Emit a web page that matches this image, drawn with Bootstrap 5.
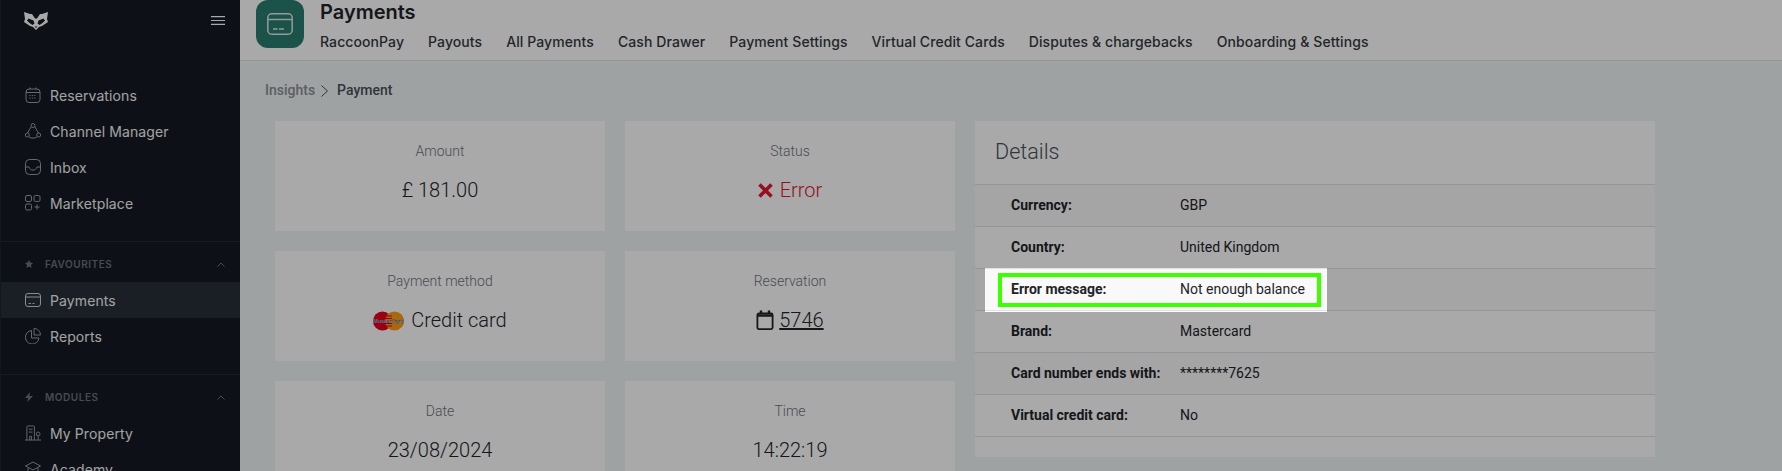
<!DOCTYPE html>
<html lang="en">
<head>
  <meta charset="UTF-8">
  <meta name="viewport" content="width=device-width, initial-scale=1.0">
  <title>Payment</title>
  <link href="https://cdn.jsdelivr.net/npm/bootstrap@5.3.3/dist/css/bootstrap.min.css" rel="stylesheet">
  <script src="https://cdn.jsdelivr.net/npm/bootstrap@5.3.3/dist/js/bootstrap.bundle.min.js" defer></script>
  <style>
    html {
      height: 471px;
      overflow: hidden;
    }
    body {
      height: 471px;
      overflow: hidden;
      background: #eff5f5;
      font-family: "Roboto", "Liberation Sans", sans-serif;
      font-size: 14px;
    }
    .side-bar {
      width: 240px;
      height: 471px;
      flex: none;
      overflow: hidden;
      background: #141a23;
      border-left: 1px solid #1c232d;
      font-family: "Inter", "Liberation Sans", sans-serif;
      color: #fff;
    }
    .side-top {
      height: 77px;
      padding: 12px 15px 0 23px;
    }
    .side-link {
      height: 36px;
      padding-left: 24px;
      gap: 9px;
      color: #f4f4f4;
      text-decoration: none;
      font-size: 14px;
      letter-spacing: .1px;
    }
    .side-link svg { flex: none; }
    .side-link.is-active { background: #263039; }
    .side-rule { border-top: 1px solid #232b36; }
    .side-gap { margin-top: 20px; }
    .side-head {
      height: 40px;
      padding: 4px 15px 0 24px;
      color: #6d7178;
      font-size: 10px;
      font-weight: 600;
      letter-spacing: .55px;
      text-transform: uppercase;
    }
    .top-bar {
      height: 61px;
      background: #fff;
      border-bottom: 1px solid #dfe3e3;
      padding-left: 16px;
      font-family: "Inter", "Liberation Sans", sans-serif;
    }
    .app-tile {
      width: 48px;
      height: 48px;
      flex: none;
      border-radius: 12px;
      background: #2a7c6e;
    }
    .page-title {
      font-size: 20px;
      font-weight: 600;
      line-height: 24px;
      color: #212529;
      margin: 0;
    }
    .tab-row { gap: 24px; margin-top: 6px; }
    .tab-link {
      font-size: 14px;
      font-weight: 500;
      line-height: 24px;
      color: #343a40;
      text-decoration: none;
      letter-spacing: .09px;
    }
    .crumbs {
      height: 60px;
      padding: 20px 0 0 25px;
      font-weight: 500;
      line-height: 18px;
      color: #8a8f94;
    }
    .crumbs svg { margin-left: 2px; }
    .crumbs b { font-weight: 500; color: #495057; margin-left: 6px; }
    .content-grid {
      display: grid;
      grid-template-columns: 330px 330px 680px;
      gap: 20px;
      padding-left: 35px;
      align-items: start;
    }
    .stat-grid {
      grid-column: span 2;
      display: grid;
      grid-template-columns: 330px 330px;
      grid-auto-rows: 110px;
      gap: 20px;
    }
    .stat-box {
      background: #fff;
      text-align: center;
      padding-top: 20px;
    }
    .stat-label {
      font-weight: 300;
      line-height: 20px;
      color: #6c757d;
    }
    .stat-value {
      font-size: 20px;
      font-weight: 300;
      line-height: 28px;
      margin-top: 15px;
      color: #212529;
    }
    .stat-value a { color: inherit; }
    .stat-err { color: #e4162f; }
    .err-mark { margin-right: 7px; vertical-align: -1px; }
    .card-mark { margin-right: 2px; vertical-align: -4px; }
    .cal-mark { vertical-align: -3px; }
    .info-box {
      position: relative;
      height: 336px;
      background: #fff;
    }
    .info-title {
      height: 64px;
      margin: 0;
      padding: 17px 20px 0;
      font-size: 21.6px;
      font-weight: 300;
      line-height: 28px;
      color: #495057;
      border-bottom: 1px solid #dee2e6;
    }
    .info-table {
      --bs-table-striped-bg: rgba(0, 0, 0, .025);
      margin: 0;
      border-collapse: separate;
      border-spacing: 0;
    }
    .info-table td {
      height: 42px;
      padding: 0;
      vertical-align: middle;
      color: #212529;
    }
    .info-table .info-key {
      width: 205px;
      padding-left: 36px;
      font-weight: 700;
    }
    /* tour spotlight over the error row */
    .tour-spot {
      position: absolute;
      top: 147px;
      left: 10px;
      width: 342px;
      height: 44px;
      box-shadow: 0 0 0 2400px rgba(0, 0, 0, .337);
      z-index: 10;
    }
    .tour-frame {
      position: absolute;
      top: 5px;
      left: 13px;
      width: 323px;
      height: 34px;
      border: 4px solid #3cff00;
    }
  </style>
</head>
<body class="d-flex">
  <aside class="side-bar">
    <div class="side-top d-flex justify-content-between">
      <svg width="24" height="18" viewBox="0 0 24 18">
        <path fill="#fff" d="M0 0l6 2h12l6-2-1 7 1 3-6 4-3 1-3 3-3-3-3-1-6-4 1-3z"/>
        <path fill="#141a23" d="M8 2h8l-3 4.500h-2z"/>
        <path fill="#141a23" d="M4.500 6.500l5 2 1 3-2 1.500-3-2-2.500-2.500zM19.500 6.500l-5 2-1 3 2 1.500 3-2 2.500-2.500z"/>
        <path fill="#141a23" d="M10.500 14.500h3L12 16z"/>
      </svg>
      <svg class="mt-1" width="14" height="9" viewBox="0 0 14 9" stroke="#fff" stroke-width="1.2"><path d="M0 .7h14M0 4.500h14M0 8.300h14"/></svg>
    </div>
    <a class="side-link d-flex align-items-center" href="#">
      <svg width="16" height="16" viewBox="0 0 16 16" fill="none" stroke="#9aa0a6"><rect x="1" y="2" width="14" height="13.500" rx="3"/><path d="M1 5.500h14M5 .5v2M11 .5v2"/><path stroke-dasharray="1.2 1.2" d="M4.500 8.500h7M4.500 11h7"/></svg>
      Reservations
    </a>
    <a class="side-link d-flex align-items-center" href="#">
      <svg width="16" height="16" viewBox="0 0 16 16" fill="none" stroke="#9aa0a6"><circle cx="8" cy="2.500" r="2"/><circle cx="2.300" cy="12" r="2"/><circle cx="13.700" cy="12" r="2"/><path d="M6.300 3.500L2.500 10M9.700 3.500L13.500 10M4 14c2.500 1.500 5.500 1.500 8 0"/></svg>
      Channel Manager
    </a>
    <a class="side-link d-flex align-items-center" href="#">
      <svg width="16" height="16" viewBox="0 0 16 16" fill="none" stroke="#9aa0a6"><rect x=".5" y=".5" width="15" height="15" rx="4"/><path d="M.5 8h3.500c.8 2.500 2 3 4 3s3.200-.5 4-3h3.500"/></svg>
      Inbox
    </a>
    <a class="side-link d-flex align-items-center" href="#">
      <svg width="16" height="16" viewBox="0 0 16 16" fill="none" stroke="#9aa0a6"><rect x=".5" y=".5" width="6" height="6" rx="1.500"/><rect x="9" y=".5" width="6" height="6" rx="1.500"/><rect x=".5" y="9" width="6" height="6" rx="1.500"/><path d="M12 9.500v5M9.500 12h5"/></svg>
      Marketplace
    </a>
    <div class="side-rule side-gap"></div>
    <div class="side-head d-flex align-items-center">
      <svg width="8" height="8" viewBox="0 0 16 16" fill="#6d7178"><path d="M8 0l2.500 5.200 5.500.8-4 4 1 6L8 13l-5 3 1-6-4-4 5.500-.8z"/></svg>
      <span class="flex-grow-1 ms-2 ps-1">Favourites</span>
      <svg width="8" height="5" viewBox="0 0 8 5" fill="none" stroke="#6d7178"><path d="M.5 4.500L4 1l3.500 3.500"/></svg>
    </div>
    <a class="side-link is-active d-flex align-items-center" href="#">
      <svg width="16" height="16" viewBox="0 0 16 16" fill="none" stroke="#cfd2d5"><rect x=".5" y="1.500" width="15" height="13" rx="2.500"/><path d="M.5 5h15M3.500 11.500h2.500M7.500 11.500h2"/></svg>
      Payments
    </a>
    <a class="side-link d-flex align-items-center" href="#">
      <svg width="16" height="16" viewBox="0 0 16 16" fill="none" stroke="#9aa0a6"><path d="M6.500 2.500a6.800 6.800 0 1 0 7.500 7.500H6.500z"/><path d="M9 .5a6.500 6.500 0 0 1 6.500 6.500H9z"/></svg>
      Reports
    </a>
    <div class="side-rule side-gap"></div>
    <div class="side-head d-flex align-items-center">
      <svg width="8" height="10" viewBox="0 0 8 10" fill="#6d7178"><path d="M5 0L0 6h3L2.500 10 8 4H4.500z"/></svg>
      <span class="flex-grow-1 ms-2 ps-1">Modules</span>
      <svg width="8" height="5" viewBox="0 0 8 5" fill="none" stroke="#6d7178"><path d="M.5 4.500L4 1l3.500 3.500"/></svg>
    </div>
    <a class="side-link d-flex align-items-center" href="#">
      <svg width="16" height="16" viewBox="0 0 17 16" fill="none" stroke="#9aa0a6"><path d="M0 15.500h17M2 15.500V1.500A1 1 0 0 1 3 .500h6a1 1 0 0 1 1 1v14M4 4h4M4 7h4M5 15.500v-4h2v4M14 15.500V11"/><circle cx="14" cy="9" r="2"/></svg>
      My Property
    </a>
    <a class="side-link d-flex align-items-center" href="#">
      <svg width="16" height="16" viewBox="0 0 16 16" fill="none" stroke="#9aa0a6"><path d="M8 1L.5 5 8 9l7.500-4zM3 7v5c3 2 7 2 10 0V7"/></svg>
      Academy
    </a>
  </aside>

  <main class="flex-grow-1">
    <header class="top-bar d-flex gap-3">
      <div class="app-tile d-flex align-items-center justify-content-center">
        <svg width="26" height="22" viewBox="0 0 26 22" fill="none" stroke="#dfe9e7" stroke-width="1.500"><rect x=".8" y=".8" width="24.400" height="20.400" rx="4"/><path d="M.8 6.500h24.400M6 16h4.500M12 16h5"/></svg>
      </div>
      <div>
        <h1 class="page-title">Payments</h1>
        <nav class="tab-row d-flex">
          <a class="tab-link" href="#">RaccoonPay</a>
          <a class="tab-link" href="#">Payouts</a>
          <a class="tab-link" href="#">All Payments</a>
          <a class="tab-link" href="#">Cash Drawer</a>
          <a class="tab-link" href="#">Payment Settings</a>
          <a class="tab-link" href="#">Virtual Credit Cards</a>
          <a class="tab-link" href="#">Disputes &amp; chargebacks</a>
          <a class="tab-link" href="#">Onboarding &amp; Settings</a>
        </nav>
      </div>
    </header>

    <div class="crumbs">
      Insights
      <svg width="7" height="12" viewBox="0 0 7 12" fill="none" stroke="#495057"><path d="M.5.500L6.500 6l-6 5.500"/></svg>
      <b>Payment</b>
    </div>

    <div class="content-grid">
      <div class="stat-grid">
        <div class="stat-box">
          <div class="stat-label">Amount</div>
          <div class="stat-value">£ 181.00</div>
        </div>
        <div class="stat-box">
          <div class="stat-label">Status</div>
          <div class="stat-value stat-err">
            <svg class="err-mark" width="15" height="15" viewBox="0 0 15 15" fill="none" stroke="#e4162f" stroke-width="3.600"><path d="M1.500 1.500l12 12M13.500 1.500l-12 12"/></svg>Error
          </div>
        </div>
        <div class="stat-box">
          <div class="stat-label">Payment method</div>
          <div class="stat-value">
            <svg class="card-mark" width="31" height="20" viewBox="0 0 31 20">
              <circle cx="9.500" cy="10" r="9.500" fill="#e8001c"/>
              <circle cx="21.500" cy="10" r="9.500" fill="#ff9d14"/>
              <path stroke="#e8001c" stroke-width="1" d="M12 5h7M12 7.500h7M12 12.500h7M12 15h7"/>
              <text x="15.500" y="12" text-anchor="middle" font-family="Liberation Sans" font-size="5.500" font-weight="700" font-style="italic" fill="#fff" stroke="#2a2a66" stroke-width=".25">MasterCard</text>
            </svg>
            Credit card
          </div>
        </div>
        <div class="stat-box">
          <div class="stat-label">Reservation</div>
          <div class="stat-value">
            <svg class="cal-mark" width="18" height="20" viewBox="0 0 18 20" fill="none" stroke="#212529" stroke-width="1.800"><rect x="1.400" y="3.400" width="15.200" height="15.700" rx="1.500"/><path d="M1.400 5.500h15.200" stroke-width="2.500"/><path d="M5 .5v3.500M13 .5v3.500" stroke-width="2.400"/></svg>
            <a href="#">5746</a>
          </div>
        </div>
        <div class="stat-box">
          <div class="stat-label">Date</div>
          <div class="stat-value">23/08/2024</div>
        </div>
        <div class="stat-box">
          <div class="stat-label">Time</div>
          <div class="stat-value">14:22:19</div>
        </div>
      </div>

      <section class="info-box">
        <h2 class="info-title">Details</h2>
        <table class="table table-striped info-table">
          <tbody>
            <tr><td class="info-key">Currency:</td><td>GBP</td></tr>
            <tr><td class="info-key">Country:</td><td>United Kingdom</td></tr>
            <tr><td class="info-key">Error message:</td><td>Not enough balance</td></tr>
            <tr><td class="info-key">Brand:</td><td>Mastercard</td></tr>
            <tr><td class="info-key">Card number ends with:</td><td>********7625</td></tr>
            <tr><td class="info-key">Virtual credit card:</td><td>No</td></tr>
          </tbody>
        </table>
        <div class="tour-spot">
          <div class="tour-frame"></div>
        </div>
      </section>
    </div>
  </main>
</body>
</html>
